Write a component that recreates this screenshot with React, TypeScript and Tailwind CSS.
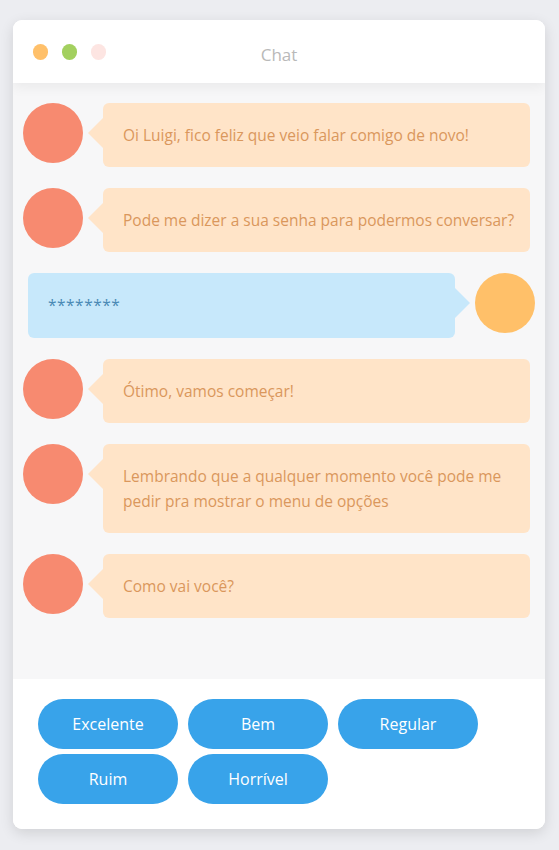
const messages = [
  { from: "bot", text: "Oi Luigi, fico feliz que veio falar comigo de novo!" },
  { from: "bot", text: "Pode me dizer a sua senha para podermos conversar?" },
  { from: "me", text: "********" },
  { from: "bot", text: "Ótimo, vamos começar!" },
  {
    from: "bot",
    text: "Lembrando que a qualquer momento você pode me pedir pra mostrar o menu de opções",
  },
  { from: "bot", text: "Como vai você?" },
];

const options = ["Excelente", "Bem", "Regular", "Ruim", "Horrível"];

function BotMessage({ text }: { text: string }) {
  return (
    <div className="flex items-start pl-[10px] pr-[15px]">
      <div className="w-[60px] h-[60px] shrink-0 rounded-full bg-[#f78a70]" />
      <div className="relative ml-[20px] flex-1 rounded-[6px] bg-[#ffe4c8] pl-[20px] pr-[12px] py-[19.5px] text-[15.5px] leading-[25px] text-[#da975c]">
        <span className="absolute left-[-15px] top-[15px] h-0 w-0 border-y-[15px] border-r-[15px] border-y-transparent border-r-[#ffe4c8]" />
        {text}
      </div>
    </div>
  );
}

function MyMessage({ text }: { text: string }) {
  return (
    <div className="flex items-start pl-[15px] pr-[10px]">
      <div className="relative mr-[20px] flex-1 rounded-[6px] bg-[#c7e8fb] px-[20px] py-[20px] text-[15.5px] leading-[25px] tracking-[0.5px] text-[#4a8ab5]">
        <span className="absolute right-[-15px] top-[15px] h-0 w-0 border-y-[15px] border-l-[15px] border-y-transparent border-l-[#c7e8fb]" />
        {text}
      </div>
      <div className="w-[60px] h-[60px] shrink-0 rounded-full bg-[#ffc069]" />
    </div>
  );
}

export default function App() {
  return (
    <div
      className="w-[559px] h-[850px] bg-[#ecedf1] pt-[20px] px-[13px]"
      style={{ fontFamily: "'Open Sans', 'Noto Sans', sans-serif" }}
    >
      <div className="w-[532px] h-[809px] flex flex-col overflow-hidden rounded-[9px] bg-white shadow-[0_4px_14px_rgba(0,0,0,0.12)]">
        <div className="relative z-10 flex h-[63px] shrink-0 items-center bg-white px-[20px] shadow-[0_4px_12px_rgba(0,0,0,0.06)]">
          <div className="flex gap-[14px]">
            <span className="w-[15px] h-[16px] rounded-full bg-[#ffc06a]" />
            <span className="w-[15px] h-[16px] rounded-full bg-[#a3d05f]" />
            <span className="w-[15px] h-[16px] rounded-full bg-[#fde5e2]" />
          </div>
          <div className="absolute inset-x-0 top-[22px] text-center text-[17px] text-[#b9b9b9]">
            Chat
          </div>
        </div>
        <div className="flex flex-1 flex-col gap-[21px] bg-[#f7f7f8] pt-[20px]">
          {messages.map((m, i) =>
            m.from === "bot" ? (
              <BotMessage key={i} text={m.text} />
            ) : (
              <MyMessage key={i} text={m.text} />
            )
          )}
        </div>
        <div className="h-[150px] shrink-0 bg-white px-[25px] pt-[20px]">
          <div className="grid grid-cols-[140px_140px_140px] gap-x-[10px] gap-y-[5px]">
            {options.map((o) => (
              <button
                key={o}
                className="h-[50px] rounded-full bg-[#38a3ea] text-[16px] text-white"
              >
                {o}
              </button>
            ))}
          </div>
        </div>
      </div>
    </div>
  );
}
